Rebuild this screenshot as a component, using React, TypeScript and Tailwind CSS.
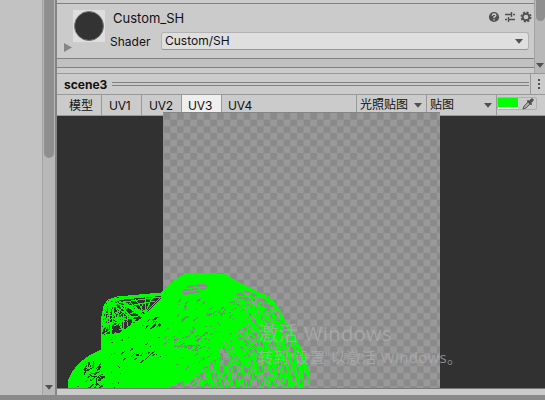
import React from 'react';

// Small deterministic generator, so the mesh keeps its shape between renders.
function makeRandom(seed: number) {
  let s = seed;
  return () => {
    s = (s * 1664525 + 1013904223) >>> 0;
    return s / 4294967296;
  };
}

type Pt = [number, number];

// Short mesh edges spread through a region, mostly following one direction.
function strokes(seed: number, count: number, box: [number, number, number, number], angle: number, spread: number, len: number) {
  const r = makeRandom(seed);
  let d = '';
  for (let i = 0; i < count; i++) {
    const x = box[0] + r() * box[2];
    const y = box[1] + r() * box[3];
    const a = angle + (r() - 0.5) * spread;
    const l = (len * (0.3 + r())) / 2;
    const dx = Math.cos(a) * l;
    const dy = Math.sin(a) * l;
    d += `M${(x - dx).toFixed(1)} ${(y - dy).toFixed(1)}l${(dx * 2).toFixed(1)} ${(dy * 2).toFixed(1)}`;
  }
  return d;
}

function fan(from: Pt[], to: Pt[]) {
  return from.map((a) => to.map((b) => `M${a[0]} ${a[1]}L${b[0]} ${b[1]}`).join('')).join('');
}

const OUTLINE = 'M11 272L12 263L16 255L23 247L32 240L44 234V220L45 200L47 190L51 184L60 181L104 177L118 164L129 158L145 157L168 159L186 169L214 182L222 193L229 207L238 221L247 240L252 258L253 272Z';

function Mesh() {
  return (
    <svg className="absolute left-0 top-0" width="488" height="272" shapeRendering="crispEdges" fill="none">
      <defs>
        <clipPath id="body"><path d={OUTLINE} /></clipPath>
      </defs>
      <g clipPath="url(#body)" stroke="#00ff00">
        <path fill="#00ff00" stroke="none" d="M10 272L15 254L31 240L43 234V219L62 217L80 205L92 197L104 184V177L118 164L130 157H168L190 172L176 182L190 200L186 212L168 222L160 240L135 262L108 272Z" />
        <g stroke="#244024" strokeWidth="1">
          <path d={strokes(41, 34, [28, 246, 17, 26], -0.6, 2.4, 6)} />
          <path d={strokes(42, 16, [14, 246, 50, 26], -0.6, 2.4, 2)} />
          <path d={strokes(43, 20, [52, 220, 52, 24], -0.6, 0.5, 3)} />
          <path d={strokes(44, 12, [74, 236, 24, 10], -0.7, 0.5, 5)} />
          <path d={strokes(45, 26, [84, 196, 21, 15], -0.7, 0.4, 6)} />
        </g>
        <g stroke="#6b8f6b" strokeWidth="1">
          <path d={strokes(31, 130, [108, 182, 90, 52], -0.6, 0.5, 5)} />
          <path d={strokes(32, 50, [108, 225, 60, 30], -0.5, 0.5, 4)} />
        </g>

        <path d={strokes(51, 60, [165, 170, 60, 60], 0.5, 0.5, 26)} />
        <path d={strokes(52, 90, [165, 190, 60, 60], 1.0, 0.5, 24)} />
        <path d={strokes(53, 150, [150, 225, 105, 50], 1.35, 0.5, 24)} />
        <path d={strokes(54, 55, [120, 175, 100, 50], -0.6, 0.5, 34)} />
        <path d={strokes(55, 50, [105, 245, 70, 28], -0.9, 0.8, 20)} />
        <path strokeWidth="3" d="M150 205L168 214L182 232L190 252M180 196L200 214L212 236L220 262M200 200L218 224L230 250L236 272" />
        <g fill="#8c8c8c" stroke="none">
          <path d="M124 176L132 169L148 168L151 171L145 176L128 179Z" />
          <path d="M178 178L184 176L193 183L189 185Z" />
          <path d="M202 182L209 184L215 191L210 193Z" />
        </g>
        <path d="M122 173L150 171M124 176L152 174M134 167L148 177M177 180L196 181M203 185L215 189" />

        <path strokeWidth="1" d={strokes(23, 44, [46, 186, 40, 34], -0.7, 2.2, 11)} />
        <path strokeWidth="1" d={fan([[51, 185], [57, 183]], [[45, 216], [54, 220], [66, 216], [80, 207], [90, 197]])} />
        <path strokeWidth="1" d={fan([[47, 210]], [[57, 186], [68, 189], [80, 195], [91, 197]])} />
        <path strokeWidth="1" d={fan([[88, 197]], [[78, 183], [88, 181], [96, 180], [107, 178]])} />
        <path strokeWidth="1" d="M66 186L104 181M72 190L98 185M57 184L108 179M66 185L84 200M72 185L90 202" />
        <path strokeWidth="3" d="M66 186L77 194L88 202" />
        <path strokeWidth="5" d="M86 204L106 184L122 167" />
        <path strokeWidth="2" d="M52 185L57 183L105 178M44 236V214L46 199L49 188" />
        <path strokeWidth="7" d="M110 178L131 160L168 162L187 172" />
        <path strokeWidth="2" d="M185 171L213 184L222 195L228 208" />
        <path strokeWidth="3" d="M224 198L232 214L245 240L252 262M216 198L225 225L236 250L243 272" />
      </g>
      <path d={OUTLINE} stroke="#00ff00" strokeWidth="1" />
    </svg>
  );
}

function Arrow({ className = '' }: { className?: string }) {
  return <svg className={'shrink-0 ' + className} width="8" height="5" viewBox="0 0 8 5"><path fill="#505050" d="M0 0H8L4 4.7Z" /></svg>;
}

function HeaderIcons() {
  return (
    <svg className="mr-[1px] mt-[6px] shrink-0" width="46" height="14" viewBox="0 0 46 14" fill="none" stroke="#505050">
      <circle cx="7" cy="7" r="5.1" fill="#505050" stroke="none" />
      <path d="M5.2 5.7Q5.3 4 7.1 4T8.9 5.6Q8.9 6.5 7 7.2V8.2M7 9.2V10.4" stroke="#d0d0d0" strokeWidth="1.3" />
      <path d="M18 4.5H24M26 4.5H28M24.5 2V7M18 9.5H20M22 9.5H28M21.5 7V12" strokeWidth="1.4" />
      <circle cx="39" cy="7" r="3.3" strokeWidth="1.9" />
      <circle cx="39" cy="7" r="4.7" strokeWidth="1.6" strokeDasharray="2.1 1.59" />
    </svg>
  );
}

export default function App() {
  return (
    <div className="flex h-[400px] w-[545px] flex-col overflow-hidden bg-[#8a8a8a] font-['Inter','Noto_Sans_CJK_SC',sans-serif] text-[12px] text-[#111]">
      <div className="flex h-[395px] shrink-0">
        <div className="w-[42px] bg-[#c2c2c2]" />
        <div className="flex w-[13px] flex-col items-center justify-between border-l border-[#a3a3a3] bg-[#b8b8b8]">
          <div className="h-[158px] w-[10px] rounded-b-[5px] bg-[#8f8f8f]" />
          <Arrow className="mb-[5px]" />
        </div>
        <div className="w-[2px] bg-[#858585]" />
        <main className="flex w-[488px] flex-col bg-[#cbcbcb]">
          <div className="flex h-[73px]">
            <div className="flex w-[477px] flex-col">
              <div className="h-[4px] border-b border-[#808080]" />
              <div className="flex h-[55px] border-b border-[#808080]">
                <svg className="ml-[6px] mt-[39px] shrink-0" width="9" height="10"><path fill="#858585" d="M1 0L9 4.5L1 9Z" /></svg>
                <div className="ml-[1px] mt-[6px] flex h-8 w-8 shrink-0 items-center justify-center bg-[#dedede]">
                  <div className="h-[30px] w-[30px] rounded-full border border-[#777] bg-[#333]" />
                </div>
                <div className="ml-[5px] flex w-[424px] flex-col">
                  <div className="flex h-[28px] justify-between">
                    <span className="ml-[3px] mt-[5px] text-[13px] leading-[18px]">Custom_SH</span>
                    <HeaderIcons />
                  </div>
                  <div className="flex h-[18px] items-center">
                    <span className="w-[51px] pt-[1px] text-[12px]">Shader</span>
                    <div className="flex h-[18px] w-[368px] items-center justify-between rounded-[3px] border border-[#b2b2b2] border-b-[#969696] bg-[#dfdfdf] pl-[3px] pr-[5px]">
                      <span>Custom/SH</span><Arrow />
                    </div>
                  </div>
                </div>
              </div>
              <div className="h-[9px] border-b border-[#808080] bg-[#c1c1c1]" />
            </div>
            <div className="flex w-[11px] flex-col items-center justify-between border-l border-[#a3a3a3] bg-[#b8b8b8]">
              <div className="h-[21px] w-[9px] rounded-b-[5px] bg-[#8f8f8f]" />
              <Arrow className="mb-[5px]" />
            </div>
          </div>
          <div className="flex h-[22px] items-center border-y border-[#999]">
            <b className="ml-[7px] w-[48px] pt-[2px] text-[12px] font-bold">scene3</b>
            <div className="h-[4px] w-[417px] border-y border-[#808080]" />
            <div className="ml-auto flex h-full w-[15px] flex-col items-center justify-center gap-[2px] border-l border-[#999] pl-[2px]">
              <i className="h-[2px] w-[2px] bg-[#505050]" /><i className="h-[2px] w-[2px] bg-[#505050]" /><i className="h-[2px] w-[2px] bg-[#505050]" />
            </div>
          </div>
          <div className="flex h-[21px] border-b border-[#999] leading-[22px]">
            <span className="w-[45px] border-r border-[#999] pl-[12px]">模型</span>
            <span className="w-[40px] border-r border-[#999] pl-[7px] tracking-[-0.25px]">UV1</span>
            <span className="w-[40px] border-r border-[#999] pl-[7px] tracking-[-0.25px]">UV2</span>
            <span className="w-[40px] border-r border-[#999] bg-[#efefef] pl-[6px] tracking-[-0.1px]">UV3</span>
            <span className="w-[134px] pl-[6px] tracking-[-0.1px]">UV4</span>
            <div className="flex w-[70px] items-center justify-between border-l border-[#999] pl-[3px] pr-[4px]"><span>光照贴图</span><Arrow /></div>
            <div className="flex w-[70px] items-center justify-between border-l border-[#999] pl-[3px] pr-[4px]"><span>贴图</span><Arrow /></div>
            <div className="w-[49px] border-l border-[#999] pt-[2px]">
              <div className="flex h-[13px] w-[40px] rounded-[2px] border border-[#b0b0b0]">
                <div className="h-[11px] w-[20px] border-b-2 border-white bg-[#00ff00]" />
                <svg className="ml-[4px]" width="12" height="12" viewBox="0 0 12 12"><path d="M1 11L2 8L6 4L8 6L4 10Z" fill="#aaa" stroke="#555" /><path d="M5 3L6 2L7 3L9 1Q10 0 11 1T11 3L9 5L10 6L9 7Z" fill="#505050" stroke="#505050" strokeWidth=".5" /></svg>
              </div>
            </div>
          </div>
          <div className="relative h-[272px] bg-[#313131]">
            <div className="absolute -top-[4px] left-[106px] h-[276px] w-[277px] border-t border-[#858585] bg-[repeating-conic-gradient(#999_0_25%,#8a8a8a_0_50%)] bg-[length:13.33px_13.33px] bg-[position:0.7px_0px]" />
            <Mesh />
            <div className="absolute left-[201px] top-[206px] whitespace-nowrap font-['Open_Sans','Noto_Sans_CJK_SC',sans-serif] text-[#aeaeae]/75">
              <div className="flex gap-[6px] text-[20px] leading-[24px]"><span>激活</span><span className="tracking-[0.4px]">Windows</span></div>
              <div className="text-[15px] leading-[22px] tracking-[0.35px]">转到“设置”以激活 Windows。</div>
            </div>
          </div>
          <div className="h-[7px] border-t border-[#777] bg-[#cbcbcb]" />
        </main>
      </div>
      <div className="h-[5px] bg-[#8a8a8a]" />
    </div>
  );
}
